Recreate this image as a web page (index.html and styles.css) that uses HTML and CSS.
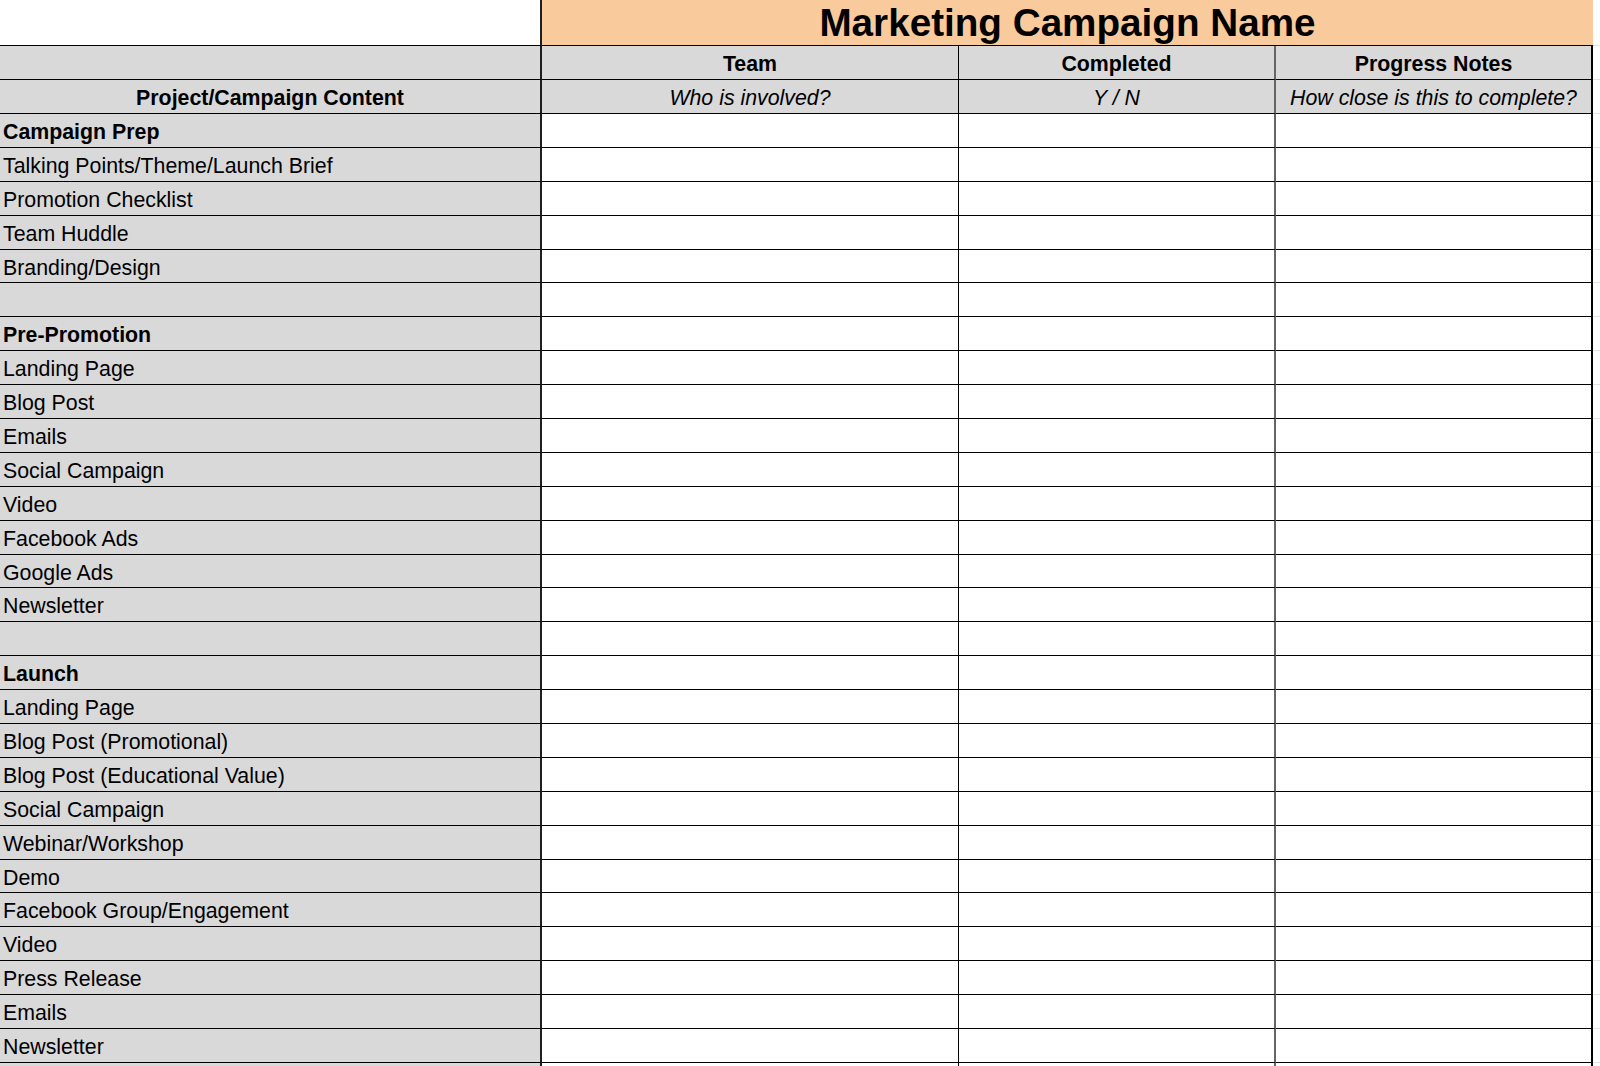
FILE: index.html
```html
<!DOCTYPE html>
<html>
<head>
<meta charset="utf-8">
<title>Marketing Campaign</title>
<link rel="stylesheet" href="styles.css">
</head>
<body>
<div class="sheet">
  <div class="row title-row">
    <div class="cell a white"></div>
    <div class="cell title">Marketing Campaign Name</div>
    <div class="cell g"></div>
  </div>
  <div class="row head-row">
    <div class="cell a"></div>
    <div class="cell b hd bold">Team</div>
    <div class="cell c hd bold">Completed</div>
    <div class="cell d hd bold">Progress Notes</div>
    <div class="cell g"></div>
  </div>
  <div class="row head-row">
    <div class="cell a bold center">Project/Campaign Content</div>
    <div class="cell b hd it">Who is involved?</div>
    <div class="cell c hd it">Y / N</div>
    <div class="cell d hd it">How close is this to complete?</div>
    <div class="cell g"></div>
  </div>

  <div class="row"><div class="cell a bold">Campaign Prep</div><div class="cell b"></div><div class="cell c"></div><div class="cell d"></div><div class="cell g"></div></div>
  <div class="row"><div class="cell a">Talking Points/Theme/Launch Brief</div><div class="cell b"></div><div class="cell c"></div><div class="cell d"></div><div class="cell g"></div></div>
  <div class="row"><div class="cell a">Promotion Checklist</div><div class="cell b"></div><div class="cell c"></div><div class="cell d"></div><div class="cell g"></div></div>
  <div class="row"><div class="cell a">Team Huddle</div><div class="cell b"></div><div class="cell c"></div><div class="cell d"></div><div class="cell g"></div></div>
  <div class="row"><div class="cell a">Branding/Design</div><div class="cell b"></div><div class="cell c"></div><div class="cell d"></div><div class="cell g"></div></div>
  <div class="row"><div class="cell a"></div><div class="cell b"></div><div class="cell c"></div><div class="cell d"></div><div class="cell g"></div></div>
  <div class="row"><div class="cell a bold">Pre-Promotion</div><div class="cell b"></div><div class="cell c"></div><div class="cell d"></div><div class="cell g"></div></div>
  <div class="row"><div class="cell a">Landing Page</div><div class="cell b"></div><div class="cell c"></div><div class="cell d"></div><div class="cell g"></div></div>
  <div class="row"><div class="cell a">Blog Post</div><div class="cell b"></div><div class="cell c"></div><div class="cell d"></div><div class="cell g"></div></div>
  <div class="row"><div class="cell a">Emails</div><div class="cell b"></div><div class="cell c"></div><div class="cell d"></div><div class="cell g"></div></div>
  <div class="row"><div class="cell a">Social Campaign</div><div class="cell b"></div><div class="cell c"></div><div class="cell d"></div><div class="cell g"></div></div>
  <div class="row"><div class="cell a">Video</div><div class="cell b"></div><div class="cell c"></div><div class="cell d"></div><div class="cell g"></div></div>
  <div class="row"><div class="cell a">Facebook Ads</div><div class="cell b"></div><div class="cell c"></div><div class="cell d"></div><div class="cell g"></div></div>
  <div class="row"><div class="cell a">Google Ads</div><div class="cell b"></div><div class="cell c"></div><div class="cell d"></div><div class="cell g"></div></div>
  <div class="row"><div class="cell a">Newsletter</div><div class="cell b"></div><div class="cell c"></div><div class="cell d"></div><div class="cell g"></div></div>
  <div class="row"><div class="cell a"></div><div class="cell b"></div><div class="cell c"></div><div class="cell d"></div><div class="cell g"></div></div>
  <div class="row"><div class="cell a bold">Launch</div><div class="cell b"></div><div class="cell c"></div><div class="cell d"></div><div class="cell g"></div></div>
  <div class="row"><div class="cell a">Landing Page</div><div class="cell b"></div><div class="cell c"></div><div class="cell d"></div><div class="cell g"></div></div>
  <div class="row"><div class="cell a">Blog Post (Promotional)</div><div class="cell b"></div><div class="cell c"></div><div class="cell d"></div><div class="cell g"></div></div>
  <div class="row"><div class="cell a">Blog Post (Educational Value)</div><div class="cell b"></div><div class="cell c"></div><div class="cell d"></div><div class="cell g"></div></div>
  <div class="row"><div class="cell a">Social Campaign</div><div class="cell b"></div><div class="cell c"></div><div class="cell d"></div><div class="cell g"></div></div>
  <div class="row"><div class="cell a">Webinar/Workshop</div><div class="cell b"></div><div class="cell c"></div><div class="cell d"></div><div class="cell g"></div></div>
  <div class="row"><div class="cell a">Demo</div><div class="cell b"></div><div class="cell c"></div><div class="cell d"></div><div class="cell g"></div></div>
  <div class="row"><div class="cell a">Facebook Group/Engagement</div><div class="cell b"></div><div class="cell c"></div><div class="cell d"></div><div class="cell g"></div></div>
  <div class="row"><div class="cell a">Video</div><div class="cell b"></div><div class="cell c"></div><div class="cell d"></div><div class="cell g"></div></div>
  <div class="row"><div class="cell a">Press Release</div><div class="cell b"></div><div class="cell c"></div><div class="cell d"></div><div class="cell g"></div></div>
  <div class="row"><div class="cell a">Emails</div><div class="cell b"></div><div class="cell c"></div><div class="cell d"></div><div class="cell g"></div></div>
  <div class="row"><div class="cell a">Newsletter</div><div class="cell b"></div><div class="cell c"></div><div class="cell d"></div><div class="cell g"></div></div>
  <div class="row"><div class="cell a"></div><div class="cell b"></div><div class="cell c"></div><div class="cell d"></div><div class="cell g"></div></div>
</div>
</body>
</html>
```

FILE: styles.css
```css
html, body {
  margin: 0;
  padding: 0;
  background: #ffffff;
  overflow: hidden;
}

body {
  font-family: "Liberation Sans", Arial, sans-serif;
  color: #000000;
}

.sheet {
  display: flex;
  flex-direction: column;
  width: 1600px;
}

.row {
  display: grid;
  grid-template-columns: 542px 417px 317px 317px 7px;
  height: 33.893px;
  flex: none;
}

.title-row {
  height: 46px;
}

.head-row {
  height: 34px;
}

.cell {
  box-sizing: border-box;
  border-bottom: 1px solid #000000;
  font-size: 21.33px;
  line-height: 34px;
  white-space: nowrap;
  overflow: hidden;
  padding: 1px 3px 0 3px;
  background: #ffffff;
}

.a {
  background: #d9d9d9;
  border-right: 2px solid #1e1e1e;
}

.a.white {
  background: #ffffff;
}

.b {
  border-right: 1px solid #000000;
}

.c {
  border-right: 2px solid #666666;
}

.d {
  border-right: 2px solid #000000;
}

.g {
  border-bottom: 1px solid #e2e2e2;
  padding: 0;
}

.title {
  grid-column: 2 / 5;
  background: #f9cb9c;
  font-size: 38.67px;
  font-weight: bold;
  line-height: 45px;
  padding-top: 0;
  text-align: center;
}

.hd {
  background: #d9d9d9;
  text-align: center;
}

.center {
  text-align: center;
}

.bold {
  font-weight: bold;
}

.it {
  font-style: italic;
}
```
